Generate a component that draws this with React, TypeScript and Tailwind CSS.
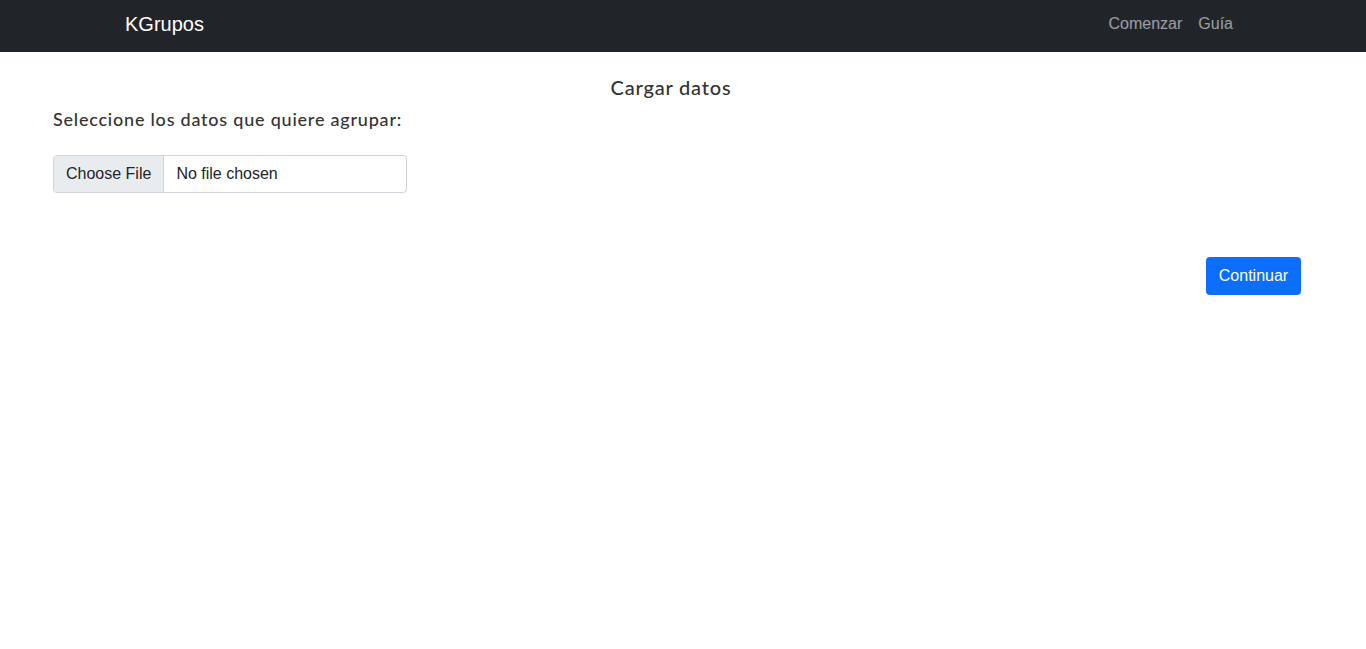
import React from "react";

const sans = "font-['Liberation_Sans',Arial,sans-serif]";
const heading = "font-['Lato','Noto_Sans',sans-serif]";

export default function App() {
  return (
    <div className="min-h-screen bg-white text-[#212529]">
      <nav className="h-[52px] bg-[#212529]">
        <div className={`mx-auto flex h-full max-w-[1140px] items-center justify-between px-3 pb-1 ${sans}`}>
          <a href="#" className="text-[20px] leading-[30px] text-white">
            KGrupos
          </a>
          <div className="flex items-center">
            <a href="#" className="px-2 text-[16px] leading-6 text-white/55">
              Comenzar
            </a>
            <a href="#" className="px-2 text-[16px] leading-6 text-white/55">
              Guía
            </a>
          </div>
        </div>
      </nav>

      <main className="px-[53px]">
        <h2 className={`mt-[23px] pr-[24px] text-center text-[20px] font-medium leading-6 tracking-[0.8px] text-[#333] ${heading}`}>
          Cargar datos
        </h2>
        <p className={`mt-[8px] text-[18px] font-medium leading-6 tracking-[0.78px] text-[#333] ${heading}`}>
          Seleccione los datos que quiere agrupar:
        </p>

        <label className={`mt-[24px] flex h-[38px] w-[354px] cursor-pointer overflow-hidden rounded-[4px] border border-[#ced4da] text-[16px] ${sans}`}>
          <span className="flex items-center border-r border-[#ced4da] bg-[#e9ecef] px-3 text-[#212529]">
            Choose File
          </span>
          <span className="flex items-center px-3 text-[#212529]">No file chosen</span>
          <input type="file" className="hidden" />
        </label>

        <div className="mt-[64px] flex justify-end pr-[12px]">
          <button
            className={`h-[38px] w-[95px] rounded-[4px] bg-[#0d6efd] text-[16px] text-white ${sans}`}
          >
            Continuar
          </button>
        </div>
      </main>
    </div>
  );
}
